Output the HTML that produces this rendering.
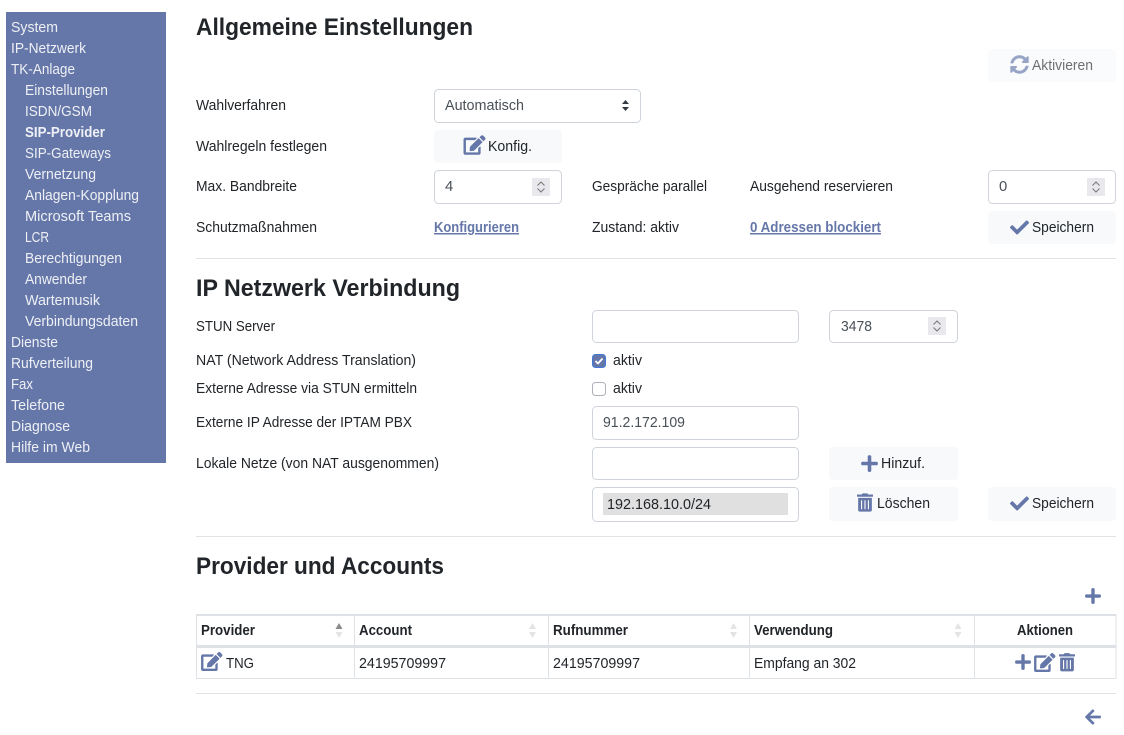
<!DOCTYPE html>
<html lang="de"><head><meta charset="utf-8"><title>IPTAM PBX</title>
<style>
html,body{margin:0;padding:0;background:#fff;width:1124px;height:735px;overflow:hidden}
svg{display:block}
text{font-family:"Liberation Sans",Arial,sans-serif;font-size:14.8px;fill:#212529}
.n text{fill:#eef0f5}
.i{fill:#495057}
.b{font-weight:bold}
.h{font-size:24px;font-weight:bold}
.l{font-weight:bold;fill:#6577a8;text-decoration:underline}
.f{fill:#fff;stroke:#ced4da}
.s{fill:#f8f9fa}
.c{fill:#6577a8}
</style></head><body>
<svg width="1124" height="735" viewBox="0 0 1124 735" xmlns="http://www.w3.org/2000/svg">
<rect x="6" y="12" width="160" height="451" fill="#6577a8"/>
<g class="n">
<text x="11" y="32" textLength="47" lengthAdjust="spacingAndGlyphs">System</text>
<text x="11" y="53" textLength="75" lengthAdjust="spacingAndGlyphs">IP-Netzwerk</text>
<text x="11" y="74" textLength="64" lengthAdjust="spacingAndGlyphs">TK-Anlage</text>
<text x="25" y="95" textLength="83" lengthAdjust="spacingAndGlyphs">Einstellungen</text>
<text x="25" y="116" textLength="67" lengthAdjust="spacingAndGlyphs">ISDN/GSM</text>
<text x="25" y="137" textLength="80" lengthAdjust="spacingAndGlyphs" class="b">SIP-Provider</text>
<text x="25" y="158" textLength="86" lengthAdjust="spacingAndGlyphs">SIP-Gateways</text>
<text x="25" y="179" textLength="71" lengthAdjust="spacingAndGlyphs">Vernetzung</text>
<text x="25" y="200" textLength="114" lengthAdjust="spacingAndGlyphs">Anlagen-Kopplung</text>
<text x="25" y="221" textLength="106" lengthAdjust="spacingAndGlyphs">Microsoft Teams</text>
<text x="25" y="242" textLength="24" lengthAdjust="spacingAndGlyphs">LCR</text>
<text x="25" y="263" textLength="97" lengthAdjust="spacingAndGlyphs">Berechtigungen</text>
<text x="25" y="284" textLength="62" lengthAdjust="spacingAndGlyphs">Anwender</text>
<text x="25" y="305" textLength="75" lengthAdjust="spacingAndGlyphs">Wartemusik</text>
<text x="25" y="326" textLength="113" lengthAdjust="spacingAndGlyphs">Verbindungsdaten</text>
<text x="11" y="347" textLength="47" lengthAdjust="spacingAndGlyphs">Dienste</text>
<text x="11" y="368" textLength="82" lengthAdjust="spacingAndGlyphs">Rufverteilung</text>
<text x="11" y="389" textLength="22" lengthAdjust="spacingAndGlyphs">Fax</text>
<text x="11" y="410" textLength="54" lengthAdjust="spacingAndGlyphs">Telefone</text>
<text x="11" y="431" textLength="59" lengthAdjust="spacingAndGlyphs">Diagnose</text>
<text x="11" y="452" textLength="79" lengthAdjust="spacingAndGlyphs">Hilfe im Web</text>
</g>

<text x="196" y="35" class="h" textLength="277" lengthAdjust="spacingAndGlyphs">Allgemeine Einstellungen</text>
<rect x="988" y="49" width="128" height="33" rx="4" class="s" opacity=".65"/>
<svg x="1010" y="55" width="19" height="19" viewBox="0 0 512 512" opacity=".65"><path class="c" d="M370.72 133.28C339.458 104.008 298.888 87.962 255.848 88c-77.458.068-144.328 53.178-162.791 126.85-1.344 5.363-6.122 9.15-11.651 9.15H24.103c-7.498 0-13.194-6.807-11.807-14.176C33.933 94.924 134.813 8 256 8c66.448 0 126.791 26.136 171.315 68.685L463.03 40.97C478.149 25.851 504 36.559 504 57.941V192c0 13.255-10.745 24-24 24H345.941c-21.382 0-32.09-25.851-16.971-40.971l41.75-41.749zM32 296h134.059c21.382 0 32.09 25.851 16.971 40.971l-41.75 41.75c31.262 29.273 71.835 45.319 114.876 45.28 77.418-.07 144.315-53.144 162.787-126.849 1.344-5.363 6.122-9.15 11.651-9.15h57.304c7.498 0 13.194 6.807 11.807 14.176C478.067 417.076 377.187 504 256 504c-66.448 0-126.791-26.136-171.315-68.685L48.97 471.03C33.851 486.149 8 475.441 8 454.059V320c0-13.255 10.745-24 24-24z"/></svg>
<text x="1032" y="70" textLength="61" lengthAdjust="spacingAndGlyphs" opacity=".65">Aktivieren</text>

<text x="196" y="110" textLength="90" lengthAdjust="spacingAndGlyphs">Wahlverfahren</text>
<rect x="434.5" y="89.5" width="206" height="33" rx="4" class="f"/>
<text x="445" y="110" class="i" textLength="79" lengthAdjust="spacingAndGlyphs">Automatisch</text>
<path d="M622 104l3.5-4 3.5 4zM622 107l3.5 4 3.5-4z" fill="#343a40"/>

<text x="196" y="151" textLength="131" lengthAdjust="spacingAndGlyphs">Wahlregeln festlegen</text>
<rect x="434" y="130" width="128" height="33" rx="4" class="s"/>
<svg x="463.5" y="135" width="22" height="20" viewBox="0 0 576 512"><path class="c" d="M402.6 83.2l90.2 90.2c3.8 3.8 3.8 10 0 13.8L274.4 405.6l-92.8 10.3c-12.4 1.4-22.9-9.1-21.5-21.5l10.3-92.8L388.8 83.2c3.8-3.8 10-3.8 13.8 0zm162-22.9l-48.8-48.8c-15.2-15.2-39.9-15.2-55.2 0l-35.4 35.4c-3.8 3.8-3.8 10 0 13.8l90.2 90.2c3.8 3.8 10 3.8 13.8 0l35.4-35.4c15.2-15.3 15.2-40 0-55.2zM384 346.2V448H64V128h229.8c3.2 0 6.2-1.3 8.5-3.5l40-40c7.6-7.6 2.2-20.5-8.5-20.5H48C21.5 64 0 85.5 0 112v352c0 26.5 21.5 48 48 48h352c26.5 0 48-21.5 48-48V306.2c0-10.7-12.9-16-20.5-8.5l-40 40c-2.2 2.3-3.5 5.3-3.5 8.5z"/></svg>
<text x="488" y="151" textLength="44" lengthAdjust="spacingAndGlyphs">Konfig.</text>

<text x="196" y="191" textLength="101" lengthAdjust="spacingAndGlyphs">Max. Bandbreite</text>
<rect x="434.5" y="170.5" width="127" height="33" rx="4" class="f"/>
<text x="445" y="191" class="i">4</text>
<rect x="532" y="178" width="18" height="18" fill="#e9e9ed"/>
<path d="M537.5 185.5l3.5-3.5 3.5 3.5M537.5 188.5l3.5 3.5 3.5-3.5" fill="none" stroke="#777" stroke-width="1"/>
<text x="592" y="191" textLength="115" lengthAdjust="spacingAndGlyphs">Gespräche parallel</text>
<text x="750" y="191" textLength="143" lengthAdjust="spacingAndGlyphs">Ausgehend reservieren</text>
<rect x="988.5" y="170.5" width="127" height="33" rx="4" class="f"/>
<text x="999" y="191" class="i">0</text>
<rect x="1087" y="178" width="18" height="18" fill="#e9e9ed"/>
<path d="M1092.500 185.500l3.500-3.500 3.500 3.500M1092.500 188.500l3.500 3.500 3.500-3.500" fill="none" stroke="#777" stroke-width="1"/>

<text x="196" y="232" textLength="121" lengthAdjust="spacingAndGlyphs">Schutzmaßnahmen</text>
<text x="434" y="232" class="l" textLength="85" lengthAdjust="spacingAndGlyphs">Konfigurieren</text>
<text x="592" y="232" textLength="87" lengthAdjust="spacingAndGlyphs">Zustand: aktiv</text>
<text x="750" y="232" class="l" textLength="131" lengthAdjust="spacingAndGlyphs">0 Adressen blockiert</text>
<rect x="988" y="211" width="128" height="33" rx="4" class="s"/>
<svg x="1010" y="218" width="19" height="19" viewBox="0 0 512 512"><path class="c" d="M173.898 439.404l-166.4-166.4c-9.997-9.997-9.997-26.206 0-36.204l36.203-36.204c9.997-9.998 26.207-9.998 36.204 0L192 312.69 432.095 72.596c9.997-9.997 26.207-9.997 36.204 0l36.203 36.204c9.997 9.997 9.997 26.206 0 36.204l-294.4 294.401c-9.998 9.997-26.207 9.997-36.204-.001z"/></svg>
<text x="1032" y="232" textLength="62" lengthAdjust="spacingAndGlyphs">Speichern</text>

<rect x="196" y="258" width="920" height="1" fill="#e2e3e6"/>

<text x="196" y="296" class="h" textLength="264" lengthAdjust="spacingAndGlyphs">IP Netzwerk Verbindung</text>
<text x="196" y="331" textLength="79" lengthAdjust="spacingAndGlyphs">STUN Server</text>
<rect x="592.500" y="310.500" width="206" height="32" rx="4" class="f"/>
<rect x="829.500" y="310.500" width="128" height="32" rx="4" class="f"/>
<text x="841" y="331" class="i" textLength="31" lengthAdjust="spacingAndGlyphs">3478</text>
<rect x="928" y="317" width="18" height="18" fill="#e9e9ed"/>
<path d="M933.500 324.500l3.500-3.500 3.500 3.500M933.500 327.500l3.500 3.500 3.500-3.500" fill="none" stroke="#777" stroke-width="1"/>

<text x="196" y="365" textLength="220" lengthAdjust="spacingAndGlyphs">NAT (Network Address Translation)</text>
<rect x="592.500" y="354.500" width="13" height="13" rx="3" fill="#6577a8" stroke="#3f78d8"/>
<path d="M595.500 361l2.500 2.500 4.500-5" fill="none" stroke="#fff" stroke-width="1.800"/>
<text x="613" y="365" textLength="29" lengthAdjust="spacingAndGlyphs">aktiv</text>

<text x="196" y="393" textLength="221" lengthAdjust="spacingAndGlyphs">Externe Adresse via STUN ermitteln</text>
<rect x="592.500" y="382.500" width="13" height="13" rx="3" fill="#fff" stroke="#adb0b8"/>
<text x="613" y="393" textLength="29" lengthAdjust="spacingAndGlyphs">aktiv</text>

<text x="196" y="427" textLength="216" lengthAdjust="spacingAndGlyphs">Externe IP Adresse der IPTAM PBX</text>
<rect x="592.500" y="406.500" width="206" height="33" rx="4" class="f"/>
<text x="603" y="427" class="i" textLength="82" lengthAdjust="spacingAndGlyphs">91.2.172.109</text>

<text x="196" y="468" textLength="243" lengthAdjust="spacingAndGlyphs">Lokale Netze (von NAT ausgenommen)</text>
<rect x="592.500" y="447.500" width="206" height="32" rx="4" class="f"/>
<rect x="829" y="447" width="129" height="33" rx="4" class="s"/>
<svg x="861" y="454" width="17" height="19" viewBox="0 0 448 512"><path class="c" d="M416 208H272V64c0-17.670-14.330-32-32-32h-32c-17.670 0-32 14.330-32 32v144H32c-17.670 0-32 14.330-32 32v32c0 17.670 14.330 32 32 32h144v144c0 17.670 14.330 32 32 32h32c17.670 0 32-14.330 32-32V304h144c17.670 0 32-14.330 32-32v-32c0-17.670-14.330-32-32-32z"/></svg>
<text x="881" y="468" textLength="44" lengthAdjust="spacingAndGlyphs">Hinzuf.</text>

<rect x="592.500" y="487.500" width="206" height="34" rx="4" class="f"/>
<rect x="603" y="493" width="185" height="22" fill="#e0e0e0"/>
<text x="607" y="509" textLength="104" lengthAdjust="spacingAndGlyphs">192.168.10.0/24</text>
<rect x="829" y="487" width="129" height="34" rx="4" class="s"/>
<svg x="857" y="493" width="16" height="19" viewBox="0 0 448 512"><path class="c" d="M32 464a48 48 0 0 0 48 48h288a48 48 0 0 0 48-48V128H32zm272-256a16 16 0 0 1 32 0v224a16 16 0 0 1-32 0zm-96 0a16 16 0 0 1 32 0v224a16 16 0 0 1-32 0zm-96 0a16 16 0 0 1 32 0v224a16 16 0 0 1-32 0zM432 32H312l-9.400-18.700A24 24 0 0 0 281.100 0H166.800a23.720 23.720 0 0 0-21.400 13.300L136 32H16A16 16 0 0 0 0 48v32a16 16 0 0 0 16 16h416a16 16 0 0 0 16-16V48a16 16 0 0 0-16-16z"/></svg>
<text x="877" y="508" textLength="53" lengthAdjust="spacingAndGlyphs">Löschen</text>
<rect x="988" y="487" width="128" height="34" rx="4" class="s"/>
<svg x="1010" y="494" width="19" height="19" viewBox="0 0 512 512"><path class="c" d="M173.898 439.404l-166.400-166.400c-9.997-9.997-9.997-26.206 0-36.204l36.203-36.204c9.997-9.998 26.207-9.998 36.204 0L192 312.690 432.095 72.596c9.997-9.997 26.207-9.997 36.204 0l36.203 36.204c9.997 9.997 9.997 26.206 0 36.204l-294.400 294.401c-9.998 9.997-26.207 9.997-36.204-.001z"/></svg>
<text x="1032" y="508" textLength="62" lengthAdjust="spacingAndGlyphs">Speichern</text>

<rect x="196" y="536" width="920" height="1" fill="#e2e3e6"/>

<text x="196" y="574" class="h" textLength="248" lengthAdjust="spacingAndGlyphs">Provider und Accounts</text>
<svg x="1085" y="587" width="16" height="18" viewBox="0 0 448 512"><path class="c" d="M416 208H272V64c0-17.670-14.330-32-32-32h-32c-17.670 0-32 14.330-32 32v144H32c-17.670 0-32 14.330-32 32v32c0 17.670 14.330 32 32 32h144v144c0 17.670 14.330 32 32 32h32c17.670 0 32-14.330 32-32V304h144c17.670 0 32-14.330 32-32v-32c0-17.670-14.330-32-32-32z"/></svg>

<g fill="#dee2e6">
<rect x="196" y="614" width="920.500" height="2"/>
<rect x="196" y="645" width="920.500" height="3"/>
<rect x="196" y="678" width="920.500" height="1"/>
<rect x="196" y="614" width="1" height="65"/>
<rect x="354" y="614" width="1" height="65"/>
<rect x="548" y="614" width="1" height="65"/>
<rect x="749" y="614" width="1" height="65"/>
<rect x="974" y="614" width="1" height="65"/>
<rect x="1115.500" y="614" width="1" height="65"/>
</g>
<text x="201" y="635" class="b" textLength="54" lengthAdjust="spacingAndGlyphs">Provider</text>
<text x="359" y="635" class="b" textLength="53" lengthAdjust="spacingAndGlyphs">Account</text>
<text x="553" y="635" class="b" textLength="75" lengthAdjust="spacingAndGlyphs">Rufnummer</text>
<text x="754" y="635" class="b" textLength="79" lengthAdjust="spacingAndGlyphs">Verwendung</text>
<text x="1017" y="635" class="b" textLength="56" lengthAdjust="spacingAndGlyphs">Aktionen</text>
<path d="M335.500 629l3.500-6 3.500 6z" fill="#8a8a8a"/><path d="M335.500 632l3.500 6 3.500-6z" fill="#e4e4e4"/>
<path d="M529 629l3.500-6 3.500 6zM529 632l3.500 6 3.500-6z" fill="#e4e4e4"/>
<path d="M730 629l3.500-6 3.500 6zM730 632l3.500 6 3.500-6z" fill="#e4e4e4"/>
<path d="M954.500 629l3.500-6 3.500 6zM954.500 632l3.500 6 3.500-6z" fill="#e4e4e4"/>

<svg x="201" y="652" width="21.500" height="19" viewBox="0 0 576 512"><path class="c" d="M402.600 83.200l90.200 90.200c3.800 3.800 3.800 10 0 13.800L274.400 405.600l-92.800 10.300c-12.400 1.400-22.900-9.100-21.500-21.500l10.300-92.800L388.800 83.200c3.800-3.800 10-3.800 13.800 0zm162-22.900l-48.800-48.800c-15.200-15.200-39.900-15.200-55.200 0l-35.400 35.400c-3.800 3.800-3.800 10 0 13.800l90.200 90.200c3.800 3.800 10 3.800 13.800 0l35.400-35.400c15.200-15.300 15.200-40 0-55.200zM384 346.200V448H64V128h229.800c3.200 0 6.200-1.300 8.500-3.500l40-40c7.600-7.600 2.200-20.500-8.500-20.500H48C21.500 64 0 85.500 0 112v352c0 26.500 21.500 48 48 48h352c26.500 0 48-21.500 48-48V306.200c0-10.700-12.900-16-20.500-8.500l-40 40c-2.200 2.300-3.500 5.300-3.500 8.500z"/></svg>
<text x="226" y="668" textLength="28" lengthAdjust="spacingAndGlyphs">TNG</text>
<text x="359" y="668" textLength="87" lengthAdjust="spacingAndGlyphs">24195709997</text>
<text x="553" y="668" textLength="87" lengthAdjust="spacingAndGlyphs">24195709997</text>
<text x="754" y="668" textLength="102" lengthAdjust="spacingAndGlyphs">Empfang an 302</text>
<svg x="1015" y="653" width="16" height="18" viewBox="0 0 448 512"><path class="c" d="M416 208H272V64c0-17.670-14.330-32-32-32h-32c-17.670 0-32 14.330-32 32v144H32c-17.670 0-32 14.330-32 32v32c0 17.670 14.330 32 32 32h144v144c0 17.670 14.330 32 32 32h32c17.670 0 32-14.330 32-32V304h144c17.670 0 32-14.330 32-32v-32c0-17.670-14.330-32-32-32z"/></svg>
<svg x="1034" y="653" width="21.500" height="19" viewBox="0 0 576 512"><path class="c" d="M402.600 83.200l90.200 90.200c3.800 3.800 3.800 10 0 13.800L274.400 405.600l-92.800 10.300c-12.400 1.400-22.900-9.100-21.500-21.500l10.300-92.800L388.800 83.200c3.800-3.800 10-3.800 13.800 0zm162-22.900l-48.800-48.800c-15.200-15.200-39.900-15.200-55.200 0l-35.400 35.400c-3.800 3.800-3.800 10 0 13.800l90.200 90.200c3.800 3.800 10 3.800 13.800 0l35.400-35.400c15.200-15.300 15.200-40 0-55.200zM384 346.200V448H64V128h229.800c3.200 0 6.200-1.300 8.500-3.500l40-40c7.600-7.600 2.200-20.500-8.500-20.500H48C21.500 64 0 85.500 0 112v352c0 26.500 21.500 48 48 48h352c26.500 0 48-21.500 48-48V306.200c0-10.700-12.900-16-20.500-8.500l-40 40c-2.200 2.300-3.500 5.300-3.500 8.500z"/></svg>
<svg x="1059" y="653" width="16" height="18.500" viewBox="0 0 448 512"><path class="c" d="M32 464a48 48 0 0 0 48 48h288a48 48 0 0 0 48-48V128H32zm272-256a16 16 0 0 1 32 0v224a16 16 0 0 1-32 0zm-96 0a16 16 0 0 1 32 0v224a16 16 0 0 1-32 0zm-96 0a16 16 0 0 1 32 0v224a16 16 0 0 1-32 0zM432 32H312l-9.400-18.700A24 24 0 0 0 281.100 0H166.800a23.720 23.720 0 0 0-21.400 13.300L136 32H16A16 16 0 0 0 0 48v32a16 16 0 0 0 16 16h416a16 16 0 0 0 16-16V48a16 16 0 0 0-16-16z"/></svg>

<rect x="196" y="693" width="920" height="1" fill="#e2e3e6"/>
<svg x="1085" y="708" width="16" height="18" viewBox="0 0 448 512"><path class="c" d="M257.500 445.100l-22.200 22.200c-9.400 9.400-24.600 9.400-33.900 0L7 273c-9.400-9.400-9.400-24.600 0-33.900L201.400 44.700c9.400-9.400 24.600-9.400 33.900 0l22.200 22.200c9.500 9.500 9.300 25-.4 34.300L136.600 216H424c13.300 0 24 10.700 24 24v32c0 13.300-10.700 24-24 24H136.600l120.500 114.800c9.800 9.300 10 24.800.4 34.300z"/></svg>
</svg>
</body></html>
